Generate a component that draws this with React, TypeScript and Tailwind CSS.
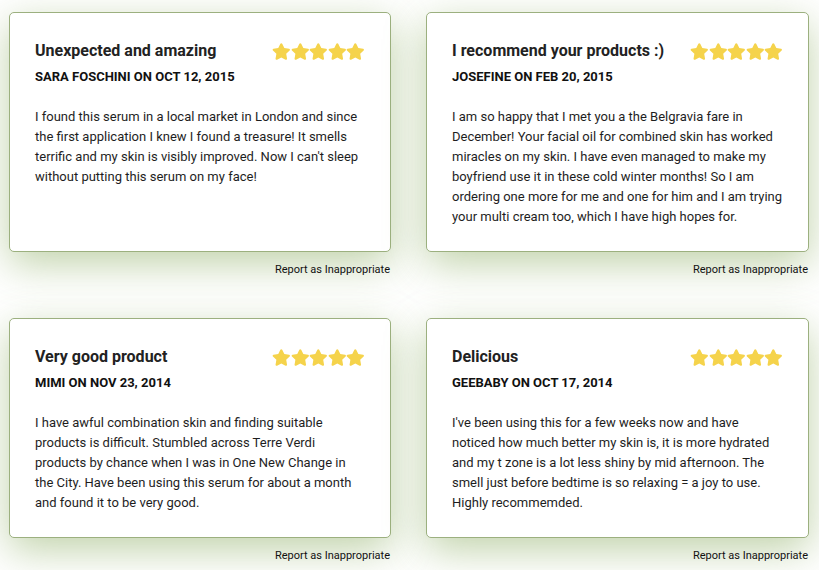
import React from "react";

const reviews = [
  {
    title: "Unexpected and amazing",
    by: "SARA FOSCHINI ON OCT 12, 2015",
    body: "I found this serum in a local market in London and since the first application I knew I found a treasure! It smells terrific and my skin is visibly improved. Now I can't sleep without putting this serum on my face!",
  },
  {
    title: "I recommend your products :)",
    by: "JOSEFINE ON FEB 20, 2015",
    body: "I am so happy that I met you a the Belgravia fare in December! Your facial oil for combined skin has worked miracles on my skin. I have even managed to make my boyfriend use it in these cold winter months! So I am ordering one more for me and one for him and I am trying your multi cream too, which I have high hopes for.",
  },
  {
    title: "Very good product",
    by: "MIMI ON NOV 23, 2014",
    body: "I have awful combination skin and finding suitable products is difficult. Stumbled across Terre Verdi products by chance when I was in One New Change in the City. Have been using this serum for about a month and found it to be very good.",
  },
  {
    title: "Delicious",
    by: "GEEBABY ON OCT 17, 2014",
    body: "I've been using this for a few weeks now and have noticed how much better my skin is, it is more hydrated and my t zone is a lot less shiny by mid afternoon. The smell just before bedtime is so relaxing = a joy to use. Highly recommemded.",
  },
];

function Star() {
  return (
    <svg width="18.6" height="17" viewBox="0 0 576 512" className="shrink-0">
      <path
        d="M259.3 17.8L194 150.2 47.9 171.5c-26.2 3.8-36.7 36.1-17.7 54.6l105.7 103-25 145.5c-4.5 26.3 23.2 46 46.4 33.7L288 439.6l130.7 68.7c23.2 12.2 50.9-7.4 46.4-33.7l-25-145.5 105.7-103c19-18.5 8.5-50.8-17.7-54.6L382 150.2 316.7 17.8c-11.7-23.6-45.6-23.9-57.4 0z"
        fill="#f5d34b"
      />
    </svg>
  );
}

function Card({ r }: { r: (typeof reviews)[number] }) {
  return (
    <div className="flex flex-col">
      <div className="flex-1 rounded-[5px] border border-[#9cb07f] bg-white pl-[25px] pr-[25px] pt-[26px] pb-[24px] shadow-[0_12px_40px_rgba(115,155,65,0.45)]">
        <div className="flex items-center justify-between">
          <h2 className="text-[16px] font-bold leading-[24px] text-[#222]">{r.title}</h2>
          <div className="flex">
            <Star />
            <Star />
            <Star />
            <Star />
            <Star />
          </div>
        </div>
        <div className="mt-[5px] text-[13px] font-bold leading-[18px] text-[#111]">{r.by}</div>
        <p className="mt-[21px] text-[13px] leading-[20px] text-[#1e1e1e]">{r.body}</p>
      </div>
      <div className="mt-[10px] pr-px text-right text-[11px] leading-[16px] text-[#111]">Report as Inappropriate</div>
    </div>
  );
}

export default function App() {
  return (
    <div
      className="min-h-[570px] bg-white pt-[12px] pl-[9px] pr-[10px]"
      style={{ fontFamily: "Roboto, 'Liberation Sans', sans-serif" }}
    >
      <div className="grid grid-cols-[382px_383px] gap-x-[35px] gap-y-[40px]">
        {reviews.map((r, i) => (
          <Card key={i} r={r} />
        ))}
      </div>
    </div>
  );
}
